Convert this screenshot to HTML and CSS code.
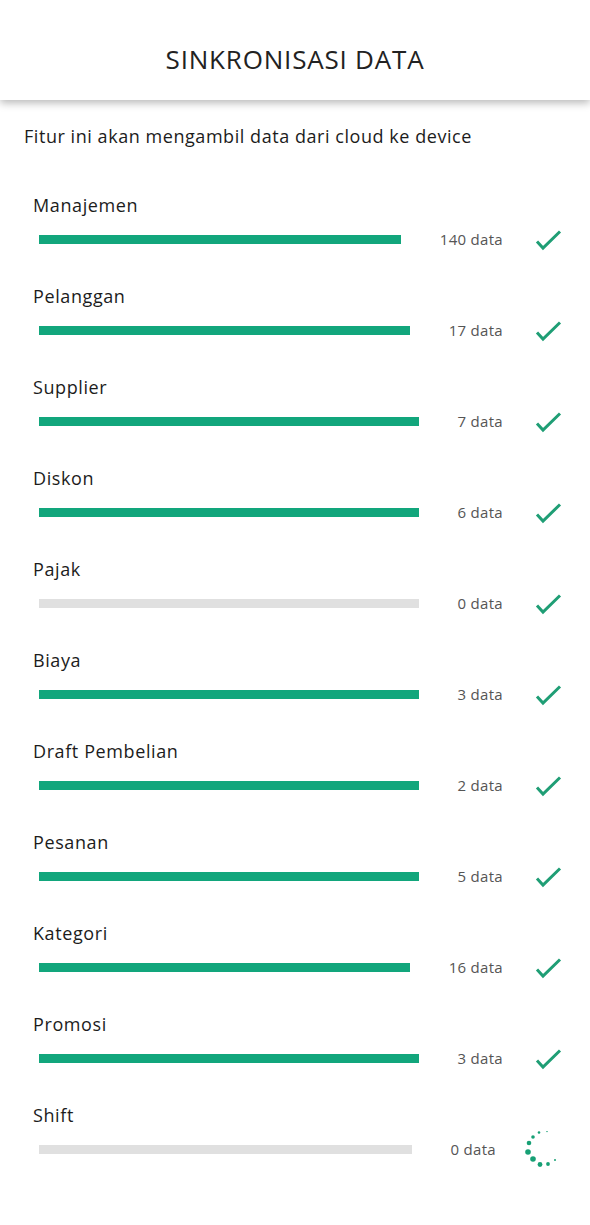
FILE: index.html
```html
<!doctype html>
<html dir="ltr" lang="id">
  <head>
    <meta charset="utf-8">
    <title>Sinkronisasi Data</title>
    <link rel="stylesheet" href="styles.css">
  </head>
  <body>
    <div class="header">
      <h1>SINKRONISASI DATA</h1>
    </div>
    <p class="intro">Fitur ini akan mengambil data dari cloud ke device</p>

    <div class="list">
      <div class="row">
        <div class="name">Manajemen</div>
        <div class="line">
          <div class="bar done"></div>
          <span class="count">140 data</span>
          <svg class="check" viewBox="0 0 30 30"><polyline points="5,17.5 11,24 28,7.5"/></svg>
        </div>
      </div>
      <div class="row">
        <div class="name">Pelanggan</div>
        <div class="line">
          <div class="bar done"></div>
          <span class="count">17 data</span>
          <svg class="check" viewBox="0 0 30 30"><polyline points="5,17.5 11,24 28,7.5"/></svg>
        </div>
      </div>
      <div class="row">
        <div class="name">Supplier</div>
        <div class="line">
          <div class="bar done"></div>
          <span class="count">7 data</span>
          <svg class="check" viewBox="0 0 30 30"><polyline points="5,17.5 11,24 28,7.5"/></svg>
        </div>
      </div>
      <div class="row">
        <div class="name">Diskon</div>
        <div class="line">
          <div class="bar done"></div>
          <span class="count">6 data</span>
          <svg class="check" viewBox="0 0 30 30"><polyline points="5,17.5 11,24 28,7.5"/></svg>
        </div>
      </div>
      <div class="row">
        <div class="name">Pajak</div>
        <div class="line">
          <div class="bar"></div>
          <span class="count">0 data</span>
          <svg class="check" viewBox="0 0 30 30"><polyline points="5,17.5 11,24 28,7.5"/></svg>
        </div>
      </div>
      <div class="row">
        <div class="name">Biaya</div>
        <div class="line">
          <div class="bar done"></div>
          <span class="count">3 data</span>
          <svg class="check" viewBox="0 0 30 30"><polyline points="5,17.5 11,24 28,7.5"/></svg>
        </div>
      </div>
      <div class="row">
        <div class="name">Draft Pembelian</div>
        <div class="line">
          <div class="bar done"></div>
          <span class="count">2 data</span>
          <svg class="check" viewBox="0 0 30 30"><polyline points="5,17.5 11,24 28,7.5"/></svg>
        </div>
      </div>
      <div class="row">
        <div class="name">Pesanan</div>
        <div class="line">
          <div class="bar done"></div>
          <span class="count">5 data</span>
          <svg class="check" viewBox="0 0 30 30"><polyline points="5,17.5 11,24 28,7.5"/></svg>
        </div>
      </div>
      <div class="row">
        <div class="name">Kategori</div>
        <div class="line">
          <div class="bar done"></div>
          <span class="count">16 data</span>
          <svg class="check" viewBox="0 0 30 30"><polyline points="5,17.5 11,24 28,7.5"/></svg>
        </div>
      </div>
      <div class="row">
        <div class="name">Promosi</div>
        <div class="line">
          <div class="bar done"></div>
          <span class="count">3 data</span>
          <svg class="check" viewBox="0 0 30 30"><polyline points="5,17.5 11,24 28,7.5"/></svg>
        </div>
      </div>
      <div class="row">
        <div class="name">Shift</div>
        <div class="line">
          <div class="bar"></div>
          <span class="count">0 data</span>
          <!-- masih loading -->
          <svg class="spinner" viewBox="0 0 37 36">
            <circle cx="22" cy="0.5" r="0.7"/>
            <circle cx="14" cy="1.5" r="1.3"/>
            <circle cx="8" cy="6" r="1.8"/>
            <circle cx="4" cy="12" r="2.3"/>
            <circle cx="3" cy="21" r="2.8"/>
            <circle cx="8" cy="28" r="2.8"/>
            <circle cx="15" cy="33.5" r="2.4"/>
            <circle cx="23" cy="33" r="1.9"/>
            <circle cx="30" cy="29" r="1"/>
          </svg>
        </div>
      </div>
    </div>
  </body>
</html>
```

FILE: styles.css
```css
* {
    box-sizing: border-box;
}

body {
    margin: 0;
    background: #fff;
    font-family: "Open Sans", "Liberation Sans", sans-serif;
    color: #1c1c1c;
}

.header {
    height: 100px;
    padding-top: 43px;
    background: #fff;
    box-shadow: 0 3px 8px rgba(0, 0, 0, 0.28);
}

.header h1 {
    margin: 0;
    font-size: 26px;
    line-height: 32px;
    font-weight: 400;
    letter-spacing: 0.8px;
    text-align: center;
    color: #222;
}

.intro {
    margin: 25px 0 0 24px;
    font-size: 18px;
    line-height: 22px;
    letter-spacing: 0.55px;
}

.list {
    margin-top: 47px;
}

.row {
    height: 91px;
}

.name {
    padding-left: 33px;
    font-size: 18px;
    line-height: 22px;
    letter-spacing: 0.6px;
}

.line {
    display: flex;
    align-items: center;
    height: 30px;
    margin-top: 8px;
    padding: 0 28px 0 39px;
}

.bar {
    flex: 1;
    height: 9px;
    background: #e0e0e0;
}

.bar.done {
    background: #12a67c;
}

.count {
    margin-left: 39px;
    font-size: 15px;
    letter-spacing: 0.3px;
    color: #555;
}

.check {
    width: 30px;
    height: 30px;
    margin-left: 29px;
}

.check polyline {
    fill: none;
    stroke: #1f9e75;
    stroke-width: 3;
}

.spinner {
    width: 37px;
    height: 36px;
    margin-left: 29px;
    fill: #17a075;
}
```
